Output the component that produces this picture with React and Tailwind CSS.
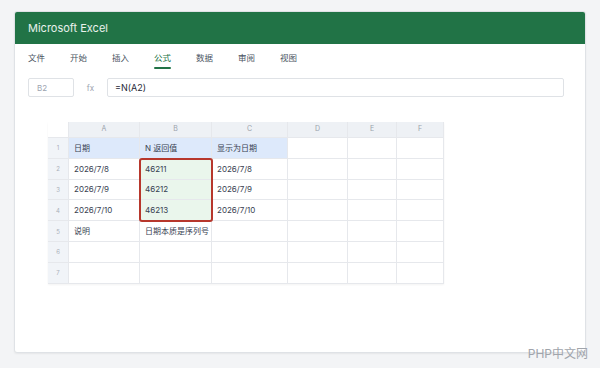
const tabs = ["文件", "开始", "插入", "公式", "数据", "审阅", "视图"];
const cols = ["A", "B", "C", "D", "E", "F"];

const rows = [
  ["日期", "N 返回值", "显示为日期", "", "", ""],
  ["2026/7/8", "46211", "2026/7/8", "", "", ""],
  ["2026/7/9", "46212", "2026/7/9", "", "", ""],
  ["2026/7/10", "46213", "2026/7/10", "", "", ""],
  ["说明", "日期本质是序列号", "", "", "", ""],
  ["", "", "", "", "", ""],
  ["", "", "", "", "", ""],
];

export default function App() {
  return (
    <div
      className="relative min-h-[368px] w-[600px] bg-[#f3f4f6] px-[14px] pt-[11px]"
      style={{ fontFamily: "Inter, 'Noto Sans CJK SC', sans-serif" }}
    >
      <div className="h-[342px] w-[572px] overflow-hidden rounded-[3px] border border-[#dfe2e6] bg-white shadow-[0_1px_2px_rgba(0,0,0,0.06)]">
        {/* Title bar */}
        <div className="flex h-[32px] items-center bg-[#217346] px-[13px] text-[11px] text-white/90">
          Microsoft Excel
        </div>

        {/* Ribbon tabs */}
        <div className="flex h-[25px] items-center gap-[25px] px-[13px] pt-[3px] text-[8.5px] text-[#4b5563]">
          {tabs.map((t) => (
            <div key={t} className="relative">
              <span className={t === "公式" ? "text-[#217346]" : ""}>{t}</span>
              {t === "公式" && (
                <div className="absolute left-0 right-0 top-[15px] h-[2px] rounded bg-[#217346]" />
              )}
            </div>
          ))}
        </div>

        {/* Formula bar */}
        <div className="mt-[9px] flex items-center pl-[13px] pr-[21px]">
          <div className="flex h-[19px] w-[46px] items-center rounded-[2px] border border-[#dfe2e6] px-[8px] text-[8px] text-[#9ca3af]">
            B2
          </div>
          <div className="w-[33px] text-center text-[8px] text-[#9ca3af]">fx</div>
          <div className="flex h-[19px] flex-1 items-center rounded-[2px] border border-[#dfe2e6] px-[7px] text-[9px] text-[#1f2937]">
            =N(A2)
          </div>
        </div>

        {/* Sheet */}
        <div className="relative ml-[33px] mt-[25px] w-fit shadow-[0_1px_2px_rgba(0,0,0,0.05)]">
          <div className="grid grid-cols-[21px_71px_72px_76px_60px_49px_47px] grid-rows-[16px_repeat(7,20.8px)]">
            <div className="border-b border-r border-[#e6e8ec] bg-white" />
            {cols.map((c) => (
              <div
                key={c}
                className="flex items-center justify-center border-b border-r border-[#e6e8ec] bg-[#eef1f5] text-[7px] text-[#9aa1ab]"
              >
                {c}
              </div>
            ))}
            {rows.map((r, i) => [
              <div
                key={"n" + i}
                className="flex items-center justify-center border-b border-r border-[#e6e8ec] bg-[#f1f4f8] text-[6px] text-[#aab0b8]"
              >
                {i + 1}
              </div>,
              ...r.map((v, j) => (
                <div
                  key={i + "-" + j}
                  className={
                    "flex items-center overflow-hidden whitespace-nowrap border-b border-r border-[#e6e8ec] px-[5px] text-[8px] text-[#374151] " +
                    (i === 0 && j < 3
                      ? "bg-[#dde9fb]"
                      : j === 1 && i >= 1 && i <= 3
                      ? "bg-[#eaf6ec]"
                      : "bg-white")
                  }
                >
                  {v}
                </div>
              )),
            ])}
          </div>
          {/* selection outline over B2:B4 */}
          <div className="pointer-events-none absolute left-[91px] top-[36px] h-[64px] w-[74px] rounded-[3px] border-2 border-[#b7372c]" />
        </div>
      </div>

      {/* Watermark */}
      <div className="absolute bottom-[5px] right-[12px] text-[12px] text-[#a0a4ab]">
        PHP中文网
      </div>
    </div>
  );
}
